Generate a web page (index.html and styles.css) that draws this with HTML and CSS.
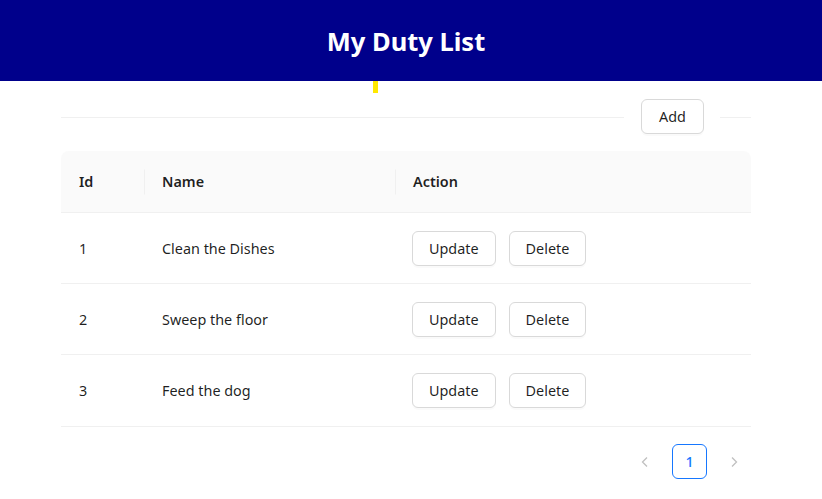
FILE: index.html
```html
<!DOCTYPE html>
<html>
<head>
<meta charset="utf-8">
<link rel="stylesheet" href="styles.css">
</head>
<body>
<header class="topbar"><h1 class="title">My Duty List</h1></header>
<div class="marker"></div>
<main class="content">
  <div class="divider">
    <span class="line line-left"></span>
    <button class="btn btn-add">Add</button>
    <span class="line line-right"></span>
  </div>
  <table class="table">
    <thead>
      <tr>
        <th class="col-id"><span class="th-text">Id</span></th>
        <th class="col-name"><span class="sep"></span><span class="th-text">Name</span></th>
        <th class="col-action"><span class="sep"></span><span class="th-text">Action</span></th>
      </tr>
    </thead>
    <tbody>
      <tr><td>1</td><td>Clean the Dishes</td><td><div class="actions"><button class="btn">Update</button><button class="btn">Delete</button></div></td></tr>
      <tr><td>2</td><td>Sweep the floor</td><td><div class="actions"><button class="btn">Update</button><button class="btn">Delete</button></div></td></tr>
      <tr><td>3</td><td>Feed the dog</td><td><div class="actions"><button class="btn">Update</button><button class="btn">Delete</button></div></td></tr>
    </tbody>
  </table>
  <nav class="pagination">
    <span class="page-arrow"><svg width="12" height="12" viewBox="0 0 12 12"><path d="M8 1.5 L3.5 6 L8 10.5" fill="none" stroke="currentColor" stroke-width="1.3"/></svg></span>
    <span class="page-item active">1</span>
    <span class="page-arrow"><svg width="12" height="12" viewBox="0 0 12 12"><path d="M4 1.5 L8.5 6 L4 10.5" fill="none" stroke="currentColor" stroke-width="1.3"/></svg></span>
  </nav>
</main>
</body>
</html>
```
FILE: styles.css
```css
* { box-sizing: border-box; }
body {
  margin: 0;
  font-family: "Noto Sans", "Open Sans", sans-serif;
  font-size: 14.4px;
  color: rgba(0,0,0,0.88);
  background: #fff;
}
.topbar {
  height: 81px;
  background: #00008b;
  display: flex;
  align-items: center;
  justify-content: center;
}
.title {
  margin: 0 10px 0 0;
  color: #fff;
  font-size: 25.5px;
  font-weight: 700;
}
.marker {
  width: 5px;
  height: 12px;
  background: #ffe800;
  margin-left: 373px;
}
.content {
  width: 690px;
  margin: 0 0 0 61px;
}
.divider {
  display: flex;
  align-items: center;
  margin-top: 6px;
  height: 35px;
}
.line {
  height: 1px;
  margin-top: 2px;
  background: #f0f0f0;
}
.line-left { flex: 1; margin-right: 17px; }
.line-right { width: 31px; margin-left: 16px; }
.btn {
  font-family: inherit;
  font-size: 14.4px;
  color: rgba(0,0,0,0.88);
  background: #fff;
  border: 1px solid #d9d9d9;
  border-radius: 6px;
  height: 35px;
  padding: 0 16px;
  box-shadow: 0 2px 0 rgba(0,0,0,0.02);
  cursor: pointer;
}
.btn-add { width: 63px; padding: 0; }
.table {
  margin-top: 17px;
  width: 690px;
  border-collapse: separate;
  border-spacing: 0;
}
.table th {
  background: #fafafa;
  font-weight: 600;
  text-align: left;
  height: 62px;
  padding: 0 18px;
  border-bottom: 1px solid #f0f0f0;
  position: relative;
}
.table th:first-child { border-top-left-radius: 8px; }
.table th:last-child { border-top-right-radius: 8px; }
.sep {
  position: absolute;
  left: 0;
  top: 50%;
  transform: translateY(-50%);
  width: 1px;
  height: 25px;
  background: #f0f0f0;
}
.col-id { width: 83px; }
.col-name { width: 251px; }
.table td {
  height: 71px;
  padding: 0 18px 0 18px;
  border-bottom: 1px solid #f0f0f0;
}
.table tbody tr:last-child td { height: 72px; }
.table td:nth-child(3) { padding-left: 17px; }
.actions { display: flex; gap: 13px; }
.pagination {
  display: flex;
  justify-content: flex-end;
  align-items: center;
  margin-top: 17px;
}
.page-arrow {
  width: 34px;
  height: 34px;
  display: flex;
  align-items: center;
  justify-content: center;
  color: rgba(0,0,0,0.25);
}
.page-arrow:first-child { margin-right: 10px; }
.page-item {
  width: 35px;
  height: 35px;
  border: 1px solid #1677ff;
  border-radius: 6px;
  color: #1677ff;
  display: flex;
  align-items: center;
  justify-content: center;
  font-weight: 500;
  margin-right: 10px;
}
```
